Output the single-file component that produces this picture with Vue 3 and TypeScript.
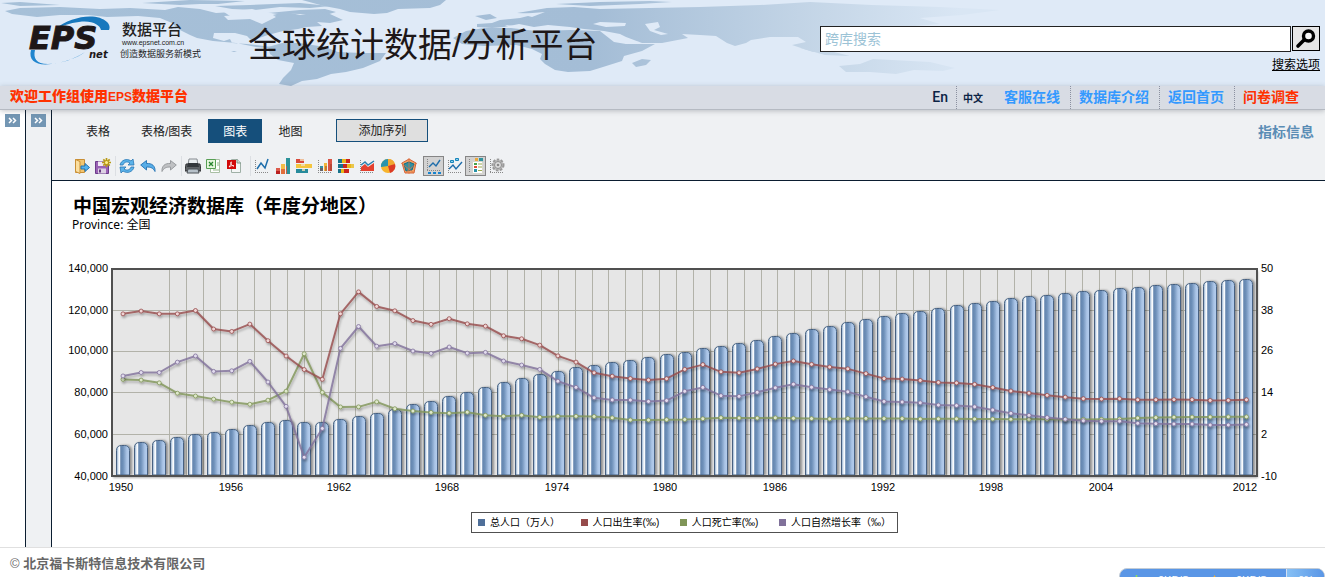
<script setup lang="ts">
import { ref } from 'vue'

const query = ref('')

const population = [
  55196, 56300, 57482, 58796, 60266, 61465, 62828, 64653, 65994, 67207, 66207, 65859, 67296, 69172, 70499, 72538,
  74542, 76368, 78534, 80671, 82992, 85229, 87177, 89211, 90859, 92420, 93717, 94974, 96259, 97542, 98705, 100072,
  101654, 103008, 104357, 105851, 107507, 109300, 111026, 112704, 114333, 115823, 117171, 118517, 119850, 121121,
  122389, 123626, 124761, 125786, 126743, 127627, 128453, 129227, 129988, 130756, 131448, 132129, 132802, 133450,
  134091, 134735, 135404,
]
const birth = [
  37, 37.8, 37, 37, 37.97, 32.6, 31.9, 34.03, 29.22, 24.78, 20.86, 18.02, 37.01, 43.37, 39.14, 37.88, 35.05, 33.96,
  35.59, 34.11, 33.43, 30.65, 29.77, 27.93, 24.82, 23.01, 19.91, 18.93, 18.25, 17.82, 18.21, 20.91, 22.28, 20.19,
  19.9, 21.04, 22.43, 23.33, 22.37, 21.58, 21.06, 19.68, 18.24, 18.09, 17.7, 17.12, 16.98, 16.57, 15.64, 14.64,
  14.03, 13.38, 12.86, 12.41, 12.29, 12.4, 12.09, 12.1, 12.14, 12.13, 11.9, 11.93, 12.1,
]
const death = [
  18, 17.8, 17, 14, 13.18, 12.28, 11.4, 10.8, 11.98, 14.59, 25.43, 14.24, 10.02, 10.04, 11.5, 9.5, 8.83, 8.43, 8.21,
  8.5, 7.6, 7.32, 7.61, 7.04, 7.34, 7.32, 7.25, 6.87, 6.25, 6.21, 6.34, 6.36, 6.6, 6.9, 6.82, 6.78, 6.86, 6.72,
  6.64, 6.54, 6.67, 6.7, 6.64, 6.64, 6.49, 6.57, 6.56, 6.51, 6.5, 6.46, 6.45, 6.43, 6.41, 6.4, 6.42, 6.51, 6.81,
  6.93, 7.06, 7.08, 7.11, 7.14, 7.15,
]
const growth = birth.map((b, i) => b - death[i])

const cx = (i: number) => 123 + i * 18.12
const yPop = (v: number) => 476 - (v - 40000) * 0.00207
const yRate = (v: number) => 476 - (v + 10) * 3.45

const bars = population.map((v, i) => {
  const x = Math.round(cx(i)) - 6.5
  const y = Math.round(yPop(v)) + 0.5
  return `M${x} 475V${y + 5}Q${x} ${y} ${x + 5} ${y}H${x + 8}Q${x + 13} ${y} ${x + 13} ${y + 5}V475Z`
})

interface Series { name: string; color: string; light: string; values: number[] }
const series: Series[] = [
  { name: '人口死亡率(‰)', color: '#7f9557', light: '#dfe8cc', values: death },
  { name: '人口出生率(‰)', color: '#964b4b', light: '#f0d6d6', values: birth },
  { name: '人口自然增长率', color: '#80719a', light: '#e2dcee', values: growth },
]
const pts = (s: Series) => s.values.map((v, i) => `${cx(i)},${yRate(v)}`).join(' ')

const rows = [310.5, 351.5, 392.5, 434.5]
const cols = Array.from({ length: 62 }, (_, i) => Math.floor(169.5 + i * 16.9) + 0.5)
const leftTicks = [['140,000', 272], ['120,000', 314], ['100,000', 354], ['80,000', 396], ['60,000', 438], ['40,000', 480]] as [string, number][]
const rightTicks = [['50', 272], ['38', 314], ['26', 354], ['14', 396], ['2', 438], ['-10', 480]] as [string, number][]
const years = [[1950, 121], [1956, 231], [1962, 339], [1968, 447], [1974, 557], [1980, 665], [1986, 775], [1992, 883], [1998, 991], [2004, 1101], [2012, 1245]]

const legend = [
  { label: '总人口（万人）', color: '#4f6f99' },
  { label: '人口出生率(‰)', color: '#964b4b' },
  { label: '人口死亡率(‰)', color: '#7f9557' },
  { label: '人口自然增长率（‰）', color: '#80719a' },
]
</script>

<template>
  <div class="page">
    <header class="banner">
      <svg class="map" viewBox="0 0 1060 86" aria-hidden="true">
        <defs>
          <linearGradient id="land" gradientUnits="userSpaceOnUse" x1="0" y1="0" x2="960" y2="0">
            <stop offset="0" stop-color="#a6c0d8" />
            <stop offset="0.62" stop-color="#a4bdd6" />
            <stop offset="0.86" stop-color="#c6d7e8" />
            <stop offset="1" stop-color="#d9e6f4" />
          </linearGradient>
        </defs>
        <g fill="url(#land)">
          <path d="M5 11 20 8 60 7 100 9 130 8 165 10 178 7 200 9 216 13 232 12 238 15 224 16 228 20 250 19 262 24 276 17 271 14 286 12 300 15 312 13 330 14 343 20 330 23 317 22 322 26 307 27 298 29 283 31 268 35 256 39 253 42 247 36 235 33 214 33 213 38 224 41 230 39 232 43 247 44 272 47 276 49 256 47 236 43 213 41 197 38 190 35 178 29 172 23 160 18 138 16 107 17 88 15 60 15 37 17 12 14z" />
          <path d="M142 3 190 0 245 1 218 4 200 4 180 5zM215 6 250 5 300 3 330 6 310 8 280 7 255 10 232 9zM268 13 300 10 325 9 336 12 326 15 300 14z" />
          <path d="M302 0H446L440 5 430 8 398 9 387 13 374 14 350 12 340 9 324 6z" />
          <path d="M268 47 282 43 300 43 325 47 338 52 362 53 386 53 380 61 363 68 346 72 331 74 317 79 302 81 291 86 279 84 283 78 291 70 294 63 278 60 270 54z" />
          <path d="M453 38 466 31 484 28 520 28 540 31 570 30 600 31 614 42 626 44 655 44 642 51 624 56 622 61 603 67 590 71 568 72 555 70 545 64 540 59 542 54 532 49 516 45 484 46 462 44z" />
          <path d="M477 27V24L492 23 500 20 520 18 536 14 517 13 547 8 574 7 600 9 650 8 700 7 760 5 810 2 872 5 940 7 1000 10 962 15 920 18 940 24 902 27 876 33 850 42 826 49 813 52 792 45 806 42 798 37 770 37 751 40 746 43 735 46 727 43 716 36 700 35 682 34 688 38 662 43 642 43 626 37 620 34 604 31 584 29 570 27 548 25 534 27 519 24 504 27 492 28z" />
          <path d="M475 16 490 14 497 18 486 20zM632 63 642 59 651 60 646 65 636 67zM839 66 860 64 873 59 892 60 930 62 955 68 943 71 914 70 896 74 870 72 846 72z" />
          <path d="M556 4 600 2 650 1 672 2 640 4 590 6zM1 3 20 2 60 5 20 6zM800 48 830 51 850 56 825 55zM231 51 237 51 234 52z" />
        </g>
        <g fill="#dfeaf7">
          <path d="M593 24 600 22 626 23 625 26 606 27zM645 24 658 22 660 27 654 30 668 34 661 35 650 31zM224 12 252 9 277 15 250 18 230 16zM606 33 626 41 640 42 627 44 614 38zM520 14 545 12 532 17zM505 25 525 27 548 29 536 31 511 28z" />
        </g>
      </svg>

      <a class="brand" href="#">
        <svg class="logo" viewBox="0 0 88 56" role="img" aria-label="EPS net">
          <path d="M27 15C43 2 69-2 79 8c3 3 3 6 2 8h-8c-1-5-9-10-22-8-9 1-17 4-24 7z" fill="#1878bd" />
          <path d="M3 36c-3 11 6 16 20 14 14-2 26-6 34-12C47 45 32 50 20 50 8 50 5 44 7 36z" fill="#2085ce" />
          <text x="1" y="35" class="logo-eps">EPS</text>
          <text x="61" y="44" class="logo-net">net</text>
        </svg>
        <span class="brand-text">
          <strong>数据平台</strong>
          <span class="url">www.epsnet.com.cn</span>
          <span class="slogan">创造数据服务新模式</span>
        </span>
      </a>
      <h1>全球统计数据/分析平台</h1>

      <form class="search" @submit.prevent>
        <div class="search-row">
          <input v-model="query" type="text" placeholder="跨库搜索" aria-label="跨库搜索" />
          <button type="submit" aria-label="搜索">
            <svg viewBox="0 0 22 22" width="22" height="22"><circle cx="13.500" cy="8" r="5" fill="#f8f8f8" stroke="#000" stroke-width="3.400" /><path d="M9 12 3 18" stroke="#000" stroke-width="3.600" stroke-linecap="round" /></svg>
          </button>
        </div>
        <a href="#">搜索选项</a>
      </form>
    </header>

    <nav class="strip">
      <strong class="welcome">欢迎工作组使用<span>EPS</span>数据平台</strong>
      <ul>
        <li><a class="lang" href="#">En</a></li>
        <li class="cn"><a class="lang zh" href="#">中文</a></li>
        <li class="plain"><a href="#">客服在线</a></li>
        <li><a href="#">数据库介绍</a></li>
        <li><a href="#">返回首页</a></li>
        <li><a class="hot" href="#">问卷调查</a></li>
      </ul>
    </nav>

    <div class="workspace">
      <aside class="rail"><button type="button" aria-label="展开数据库"><svg viewBox="0 0 15 13"><path d="M4 4l2.500 2.500L4 9M8 4l2.500 2.500L8 9" /></svg></button></aside>
      <aside class="rail grey"><button type="button" aria-label="展开维度"><svg viewBox="0 0 15 13"><path d="M4 4l2.500 2.500L4 9M8 4l2.500 2.500L8 9" /></svg></button></aside>

      <main>
        <section class="controls">
          <div class="tabs">
            <button type="button" class="tab">表格</button>
            <button type="button" class="tab">表格/图表</button>
            <button type="button" class="tab active">图表</button>
            <button type="button" class="tab">地图</button>
            <button type="button" class="add">添加序列</button>
            <a class="info" href="#">指标信息</a>
          </div>

          <div class="tools">
            <div class="group line">
              <button type="button" aria-label="打开"><svg viewBox="0 0 16 16"><path d="M1.500 1.500h9v13h-9z" fill="#f3c56f" stroke="#c98f35" /><path d="M1.500 1.500 6 3.500v12l-4.500-2z" fill="#fbdf9f" stroke="#c98f35" /><path d="M7 8h4V5.500l4.500 4-4.500 4V11H7z" fill="#56b2ec" stroke="#2272b4" /></svg></button>
              <button type="button" aria-label="保存"><svg viewBox="0 0 16 16"><path d="M.500 3.500h12l1 1v11H.500z" fill="#9a62b5" stroke="#6c3c8b" /><path d="M3 3.500h7V8H3z" fill="#f1e8f5" /><path d="M3 10.500h8v5H3z" fill="#ddd2e4" /><path d="M4 11.500h2v3H4z" fill="#663a80" /><path d="M11.500 0v9M7 4.500h9M8.300 1.300l6.400 6.400M14.700 1.300 8.300 7.700" stroke="#b99b16" stroke-width="1.700" /><circle cx="11.500" cy="4.500" r="1.500" fill="#fff18a" /></svg></button>
            </div>
            <div class="group line">
              <button type="button" aria-label="刷新"><svg viewBox="0 0 16 16"><path d="M1 7C2 2 8 0 12 3l2-2 1 6H9l2-2C8 3 5 4 4 7zM15 9c-1 5-7 7-11 4l-2 2-1-6h6l-2 2c3 2 6 1 7-2z" fill="#5bb3ea" stroke="#2a77b5" stroke-width=".800" /></svg></button>
              <button type="button" aria-label="撤销"><svg viewBox="0 0 16 16"><path d="M.700 7 6.500 2.500v3C12 5 15.500 8 15 13.500 13 10 11 9 6.500 9v3z" fill="#57ade7" stroke="#2372b3" stroke-width=".900" /></svg></button>
              <button type="button" aria-label="重做"><svg viewBox="0 0 16 16"><path d="M15.300 7 9.500 2.500v3C4 5 .500 8 1 13.500 3 10 5 9 9.500 9v3z" fill="#bfc1c3" stroke="#929598" stroke-width=".900" /></svg></button>
            </div>
            <div class="group line wide">
              <button type="button" aria-label="打印"><svg viewBox="0 0 16 16"><path d="M4 1h8l1 6H3z" fill="#e9edef" stroke="#868b90" /><path d="M1 6h14l1 7H0z" fill="#5f6366" stroke="#303234" /><path d="M3 5h10l1 4H2z" fill="#33373b" /><path d="M3 11h10l1 4H2z" fill="#b7c1c9" stroke="#4c5257" /></svg></button>
              <button type="button" aria-label="导出 Excel"><svg viewBox="0 0 16 16"><path d="M4.500 1.500h9v13h-9z" fill="#fff" stroke="#a9c0a4" /><path d="M.500 1.500h9v9h-9z" fill="#e5f6dd" stroke="#58a055" /><path d="m3 4 4 4m0-4L3 8" stroke="#27842d" stroke-width="1.300" /><path d="M11 5h2M11 7h2M7 12h6" stroke="#93b687" /></svg></button>
              <button type="button" aria-label="导出 PDF"><svg viewBox="0 0 16 16"><path d="M4.500 1.500h6l3 3v10h-9z" fill="#f4f6f6" stroke="#9fb0a6" /><path d="M10 1v4h4" fill="#ccd6d0" stroke="#80988a" /><path d="M0 2h9v9H0z" fill="#d20a0a" /><path d="M2 9C4 7 5 3 4 4S5 8 7 8C5 7 4 8 2 9z" fill="none" stroke="#fff" stroke-width=".900" /></svg></button>
            </div>
            <div class="group">
              <button type="button" aria-label="折线图"><svg viewBox="0 0 16 16"><path class="axis" d="M1.500 2v13M1 14.500h14" /><path d="M3 11 7 5l4 5 3-9" fill="none" stroke="#1d6dab" stroke-width="1.500" /></svg></button>
              <button type="button" aria-label="柱形图"><svg viewBox="0 0 16 16"><path d="M1 10h4v6H1z" fill="#dc5a4b" /><path d="M6 6h4v10H6z" fill="#f3bd47" /><path d="M11 0h4v16h-4z" fill="#2b9299" /><path d="M1 13h4v3H1z" fill="#b92020" /><path d="M6 11h4v5H6zM11 8h1v8h-1z" fill="#dd5a38" opacity=".8" /></svg></button>
              <button type="button" aria-label="条形图"><svg viewBox="0 0 16 16"><path d="M0 1h8v4H0z" fill="#d94a3b" /><path d="M0 6h16v4H0z" fill="#f4c53e" /><path d="M0 11h12v4H0z" fill="#278b9c" /><path d="M4 1h4v2H4zM6 11h3v2H6zM5 6h4v2H5z" fill="#f3ddb5" opacity=".8" /></svg></button>
              <button type="button" aria-label="组合图"><svg viewBox="0 0 16 16"><path class="axis" d="M1.500 2v13M1 14.500h14" /><path d="M3 8h3v5H3z" fill="#328fa4" /><path d="M7 5h3v8H7z" fill="#f0b73a" /><path d="M11 1h4v12h-4z" fill="#d95443" /><path d="M3 10h3v3H3zM8 8h2v5H8zM13 6h2v7h-2z" fill="#9c3a2c" opacity=".5" /></svg></button>
              <button type="button" aria-label="堆积图"><svg viewBox="0 0 16 16"><path d="M0 1h4v4H0zM0 6h5v4H0zM0 11h3v4H0z" fill="#17728b" /><path d="M4 1h4v4H4zM9 6h4v4H9zM3 11h3v4H3z" fill="#eab718" /><path d="M8 1h4v4H8zM5 6h4v4H5zM6 11h5v4H6z" fill="#cc251d" /><path d="M13 6h3v4h-3z" fill="#eac64c" /></svg></button>
              <button type="button" aria-label="面积图"><svg viewBox="0 0 16 16"><path class="axis" d="M1.500 2v13M1 14.500h14" /><path d="m2 9 4-3 3 3 6-4v8H2z" fill="#e4412f" /><path d="m2 7 4-3 3 3 6-4" fill="none" stroke="#2a7fae" stroke-width="1.400" /></svg></button>
              <button type="button" aria-label="饼图"><svg viewBox="0 0 16 16"><circle cx="8" cy="8" r="7" fill="#f7b42c" /><path d="M8 8V1A7 7 0 0 0 1 9z" fill="#2794ae" /><path d="M8 8V1a7 7 0 0 1 7 5z" fill="#f0a832" /><path d="m8 8 7-2a7 7 0 0 1-5 9z" fill="#dc3a25" /></svg></button>
              <button type="button" aria-label="雷达图"><svg viewBox="0 0 16 16"><path d="m8 1 7 4-2 10H4L1 5z" fill="#f4a063" stroke="#d2653b" /><path d="m8 4 5 2-2 6-6 1-2-7z" fill="#328fa0" stroke="#166d83" /><path d="M8 0v16M0 5l13 10M16 5 4 15" stroke="#e77441" stroke-width=".700" /></svg></button>
            </div>
            <div class="group last">
              <button type="button" class="on" aria-label="坐标轴"><svg viewBox="0 0 16 16"><path class="axis" d="M1.500 1v12M1 12.500h14" /><path d="m3 9 4-4 3 3 4-6" fill="none" stroke="#1d6dab" stroke-width="1.400" /><path d="M2 15h3M7 15h3M12 15h3" stroke="#1784d0" stroke-width="2" /></svg></button>
              <button type="button" aria-label="数据标签"><svg viewBox="0 0 16 16"><path class="axis" d="M1.500 2v13M1 14.500h14" /><path d="m2 11 4-4 3 4 6-7" fill="none" stroke="#1d6dab" stroke-width="1.400" /><path d="M3.500 2.500h3v2h-3zM8.500.500h3v2h-3z" fill="#8bd1f2" stroke="#1784b9" /></svg></button>
              <button type="button" class="on" aria-label="图例"><svg viewBox="0 0 16 16"><path class="axis" d="M1.500 1v14" /><path d="M7 0h3v4H7z" fill="#eda83b" /><path d="M11 0h4v5h-4z" fill="#31939e" /><path d="M4.500 3.500h10v12h-10z" fill="#fff" stroke="#d6d6cc" /><path d="M6 5h3v2H6z" fill="#49a34b" /><path d="M6 8h3v2H6z" fill="#dd4c38" /><path d="M6 11h3v3H6z" fill="#2791a7" /><path d="M10 6h4M10 9h4M10 12.500h4" stroke="#9ba94e" /></svg></button>
              <button type="button" aria-label="设置"><svg viewBox="0 0 16 16"><path class="axis" d="M1.500 1v13M1 14.500h14" /><circle cx="9" cy="7" r="5.500" fill="#c0c0c0" stroke="#999" stroke-width="2" stroke-dasharray="2.500 1.500" /><circle cx="9" cy="7" r="3.500" fill="#ddd" stroke="#8d8d8d" /><circle cx="9" cy="7" r="1.300" fill="#898989" /></svg></button>
            </div>
          </div>
        </section>

        <section class="report">
          <h2>中国宏观经济数据库（年度分地区）</h2>
          <p>Province: 全国</p>
          <div class="figure">
            <svg class="chart" viewBox="64 260 1241 236" role="img" aria-label="中国宏观经济数据库（年度分地区）">
              <defs>
                <linearGradient id="bar">
                  <stop offset="0" stop-color="#8fa9c6" />
                  <stop offset="0.12" stop-color="#c7d8ea" />
                  <stop offset="0.19" stop-color="#fff" />
                  <stop offset="0.27" stop-color="#f4f8fc" />
                  <stop offset="0.32" stop-color="#6385ae" />
                  <stop offset="0.5" stop-color="#6e90b9" />
                  <stop offset="0.8" stop-color="#abc5e7" />
                  <stop offset="1" stop-color="#b4cdee" />
                </linearGradient>
                <filter id="soft" x="-5%" y="-5%" width="110%" height="120%"><feDropShadow dx="1" dy="2" stdDeviation="1" flood-opacity=".3" /></filter>
                <filter id="barshade" x="-5%" y="-5%" width="110%" height="110%"><feDropShadow dx="2" dy="0" stdDeviation="1" flood-opacity=".38" /></filter>
              </defs>
              <rect x="112" y="269" width="1145" height="207" class="plot" filter="url(#soft)" />
              <path v-for="x in cols" :key="'c' + x" :d="`M${x} 270V475`" class="grid" />
              <path v-for="y in rows" :key="'r' + y" :d="`M113 ${y}H1256`" class="grid" />
              <g filter="url(#barshade)">
                <path v-for="(d, i) in bars" :key="i" :d="d" class="bar" />
              </g>
              <g v-for="s in series" :key="s.name" filter="url(#soft)" class="series">
                <polyline :points="pts(s)" :stroke="s.color" />
                <circle v-for="(v, i) in s.values" :key="i" :cx="cx(i)" :cy="yRate(v)" r="2" :fill="s.light" :stroke="s.color" />
              </g>
              <rect x="112" y="269" width="1145" height="207" class="frame" />
              <text v-for="t in leftTicks" :key="t[0]" x="108" :y="t[1]" text-anchor="end">{{ t[0] }}</text>
              <text v-for="t in rightTicks" :key="t[0]" x="1261" :y="t[1]">{{ t[0] }}</text>
              <text v-for="t in years" :key="t[0]" :x="t[1]" y="491" text-anchor="middle">{{ t[0] }}</text>
            </svg>
            <ul class="legend">
              <li v-for="l in legend" :key="l.label"><i :style="{ background: l.color }"></i>{{ l.label }}</li>
            </ul>
          </div>
        </section>
      </main>
    </div>

    <footer><span>©</span> 北京福卡斯特信息技术有限公司</footer>

    <div class="netmeter">
      <span class="speed"><i class="down"></i>0KB/S</span>
      <span class="speed"><i class="up"></i>0KB/S</span>
      <span class="load">6%</span>
    </div>
  </div>
</template>

<style>
body { margin: 0; }
</style>

<style scoped>
* { box-sizing: border-box; }
.page { position: relative; display: flex; flex-direction: column; min-height: 100vh; overflow: hidden; background: #fff; color: #222; font: 12px/16px "Liberation Sans", "Noto Sans CJK SC", sans-serif; }
button { font: inherit; color: inherit; padding: 0; border: 0; background: none; cursor: pointer; }
ul { list-style: none; margin: 0; padding: 0; }
a { color: inherit; text-decoration: none; }
.banner { position: relative; display: flex; align-items: flex-start; height: 86px; padding: 0 5px 0 28px; background: #dfeaf7; }
.map { position: absolute; left: 0; top: 0; width: 1060px; height: 86px; }
.brand, h1, .search { position: relative; }
.brand { display: flex; margin-top: 14px; color: #222; }
.logo { width: 88px; height: 56px; overflow: visible; }
.logo-eps { font: italic bold 32px "DejaVu Sans", sans-serif; fill: #1d1718; stroke: #1d1718; stroke-width: 1px; }
.logo-net { font: italic bold 10px "DejaVu Sans", sans-serif; fill: #1d1718; }
.brand-text { display: flex; flex-direction: column; width: 82px; margin: 7px 0 0 4px; white-space: nowrap; }
.brand-text strong { font-weight: 500; font-size: 15px; line-height: 18px; padding-left: 2px; }
.url { font-size: 7px; line-height: 8px; padding-left: 2px; }
.slogan { font-size: 9px; line-height: 14px; }
h1 { margin: 26px 0 0 46px; font-size: 34px; line-height: 38px; font-weight: 400; color: #1d1718; white-space: nowrap; }
.search { width: 500px; margin: 26px 0 0 auto; text-align: right; }
.search-row { display: flex; align-items: flex-start; gap: 1px; margin-bottom: 5px; }
.search input { flex: 1; height: 26px; padding: 0 4px; border: 1px solid #222; background: #fff; font: 14px "Liberation Sans", "Noto Sans CJK SC", sans-serif; }
.search input::placeholder { color: #9cc3d6; opacity: 1; }
.search button { width: 28px; height: 25px; border: 1px solid #000; background: #e6e6e6; display: grid; place-items: center; }
.search a { color: #000; text-decoration: underline; }
.strip { position: relative; z-index: 1; display: flex; justify-content: space-between; height: 24px; padding: 0 16px 0 10px; background: #d8dce4; border-bottom: 1px solid #b5bac2; box-shadow: 0 1px 5px rgba(60, 65, 75, .3); font-weight: bold; font-size: 14px; line-height: 21px; }
.welcome { color: #ff3200; line-height: 20px; }
.welcome span { font-size: 12px; }
.strip ul { display: flex; color: #3399ff; line-height: 23px; }
.strip li { padding: 0 10px 0 8px; border-left: 1px dotted #8b90a0; }
.strip li:first-child, .strip li.plain { border-left: 0; }
.strip li:first-child { padding-right: 8px; }
.strip li.cn { padding: 0 13px 0 6px; }
.lang { color: #0c2445; font-weight: 500; font-family: Roboto, "Noto Sans CJK SC", sans-serif; }
.zh { font-size: 10px; font-weight: bold; }
.hot { color: #ff3200; }
.workspace { display: flex; flex: 1; }
.rail { width: 26px; padding: 4px 5px; border-right: 1px solid #0b1d30; }
.grey, .controls { background: #eff1f3; }
.rail button { display: block; width: 15px; height: 13px; background: #7396b3; }
.rail svg { display: block; fill: none; stroke: #fff; stroke-width: 1.500; }
main { flex: 1; min-width: 0; }
.controls { height: 71px; padding: 9px 11px 0 19px; border-bottom: 1px solid #0b1d30; }
.tabs { display: flex; gap: 1px; height: 24px; align-items: flex-start; }
.tab { height: 24px; padding: 2px 15px 0; }
.active { background: #154f7b; color: #fff; }
.add { width: 92px; height: 23px; margin-left: 18px; border: 1px solid #154f7b; background: #dfdfdf; }
.info { margin-left: auto; color: #5b8db5; font-weight: bold; font-size: 14px; line-height: 26px; }
.tools { display: flex; margin-top: 13px; }
.group { display: flex; align-items: center; }
.group button { width: 21px; height: 20px; display: grid; place-items: center; }
.group svg { width: 16px; height: 16px; display: block; }
.line { padding-right: 2px; border-right: 1px solid #dcdfe3; }
.wide { padding-right: 5px; }
.last { padding-left: 4px; }
.group .on { border: 1px solid #858585; background: #d2d2d2; }
.axis { stroke: #888; fill: none; stroke-dasharray: 1 1; }
.report { padding: 14px 20px 14px 12px; color: #000; }
h2 { margin: 0; padding-left: 9px; font-size: 19px; line-height: 24px; }
p { margin: 0; padding-left: 8px; font: 12px/12px "Noto Sans", "Noto Sans CJK SC", sans-serif; }
.figure { padding-top: 29px; }
.chart { display: block; width: 100%; height: auto; }
.chart text { font: 11px "Liberation Sans", Arial, sans-serif; fill: #000; }
.plot { fill: #e6e6e6; }
.frame { fill: none; stroke: #505050; stroke-width: 2; }
.grid { stroke: #b2b2a9; stroke-width: 1; }
.bar { fill: url(#bar); stroke: #466181; stroke-width: 1; }
.series polyline { fill: none; stroke-width: 2; stroke-linejoin: round; opacity: .8; }
.series circle { stroke-width: 1; stroke-opacity: .8; }
.legend { display: flex; justify-content: space-between; width: 427px; margin: 16px auto 0; padding: 0 6px; border: 1px solid #505050; font-size: 10px; line-height: 19px; }
.legend li { display: flex; align-items: center; white-space: nowrap; }
.legend i { width: 7px; height: 7px; margin-right: 5px; }
footer { height: 30px; padding-left: 10px; border-top: 1px solid #e0e0e0; color: #666; font-weight: bold; font-size: 13px; line-height: 32px; }
footer span { font-weight: 400; }
.netmeter { position: absolute; right: 0; bottom: -17px; display: flex; width: 206px; height: 26px; border: 1px solid #c3ccd6; border-radius: 8px; background: #5a96e6; color: #fff; font-size: 11px; line-height: 22px; overflow: hidden; }
.speed { display: flex; width: 78px; padding-left: 14px; gap: 19px; }
.speed i { width: 5px; height: 10px; margin-top: 6px; background: #8fe052; clip-path: polygon(35% 0, 65% 0, 65% 50%, 100% 50%, 50% 100%, 0 50%, 35% 50%); }
.speed .up { background: #ffb21e; clip-path: polygon(50% 0, 100% 50%, 0 50%); }
.load { flex: 1; margin-left: 10px; padding-left: 11px; border-left: 1px solid #d3e0f3; background: linear-gradient(90deg, #86c0f5, #5a96e6); }
</style>
